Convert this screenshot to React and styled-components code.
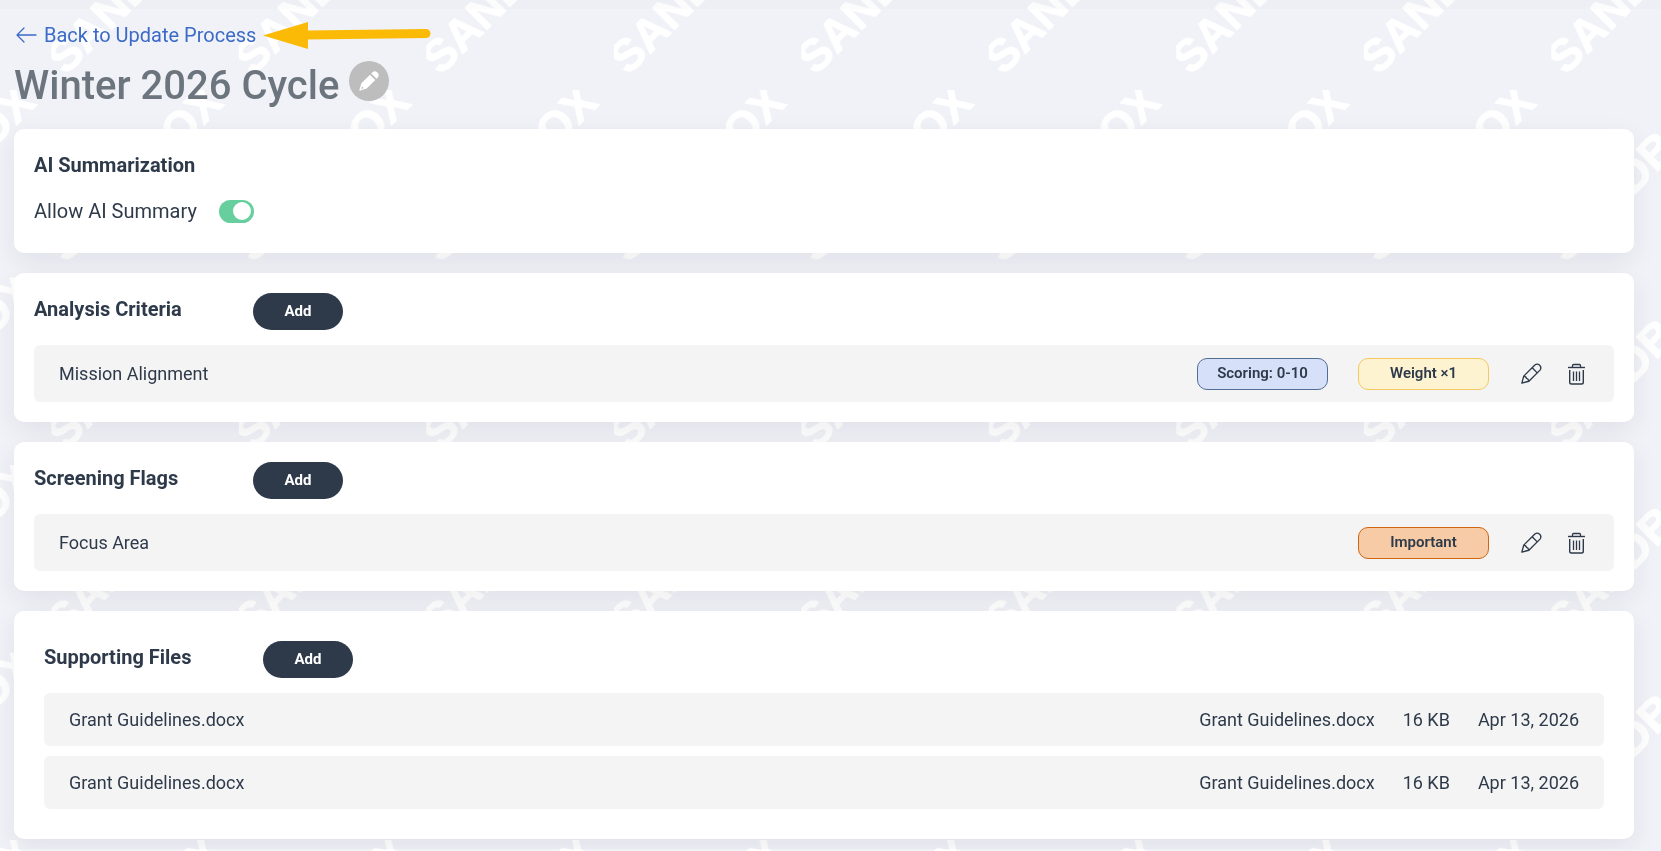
import React, { useState } from "react";
import styled, { createGlobalStyle } from "styled-components";

const GlobalStyle = createGlobalStyle`
  * {
    box-sizing: border-box;
  }

  body {
    margin: 0;
    background-color: #f1f2f8;
    color: #2e3a4a;
    font-family: Roboto, "Liberation Sans", sans-serif;
    font-size: 18px;
  }
`;

//Backdrop-------------------------------------------------
const Backdrop = styled.svg`
  position: fixed;
  inset: 0;
  width: 100%;
  height: 100%;
  z-index: -1;
`;

const TopShade = styled.div`
  position: fixed;
  inset: 0 0 auto 0;
  height: 9px;
  background: rgba(40, 50, 70, 0.015);
`;

//Header---------------------------------------------------
const Page = styled.main`
  padding: 22px 27px 10px 14px;
`;

const TopLine = styled.div`
  display: flex;
  align-items: center;
  gap: 7px;
  height: 26px;
`;

const BackLink = styled.a`
  display: flex;
  align-items: center;
  gap: 7px;
  color: #3b6bc6;
  font-size: 20px;
  line-height: 26px;
  text-decoration: none;
`;

const Pointer = styled.svg`
  width: 168px;
  height: 28px;
`;

const TitleLine = styled.div`
  display: flex;
  align-items: flex-start;
  gap: 10px;
  margin: 13px 0 18px;
`;

const Title = styled.h1`
  margin: 0;
  color: #6c757d;
  font-size: 40px;
  font-weight: 500;
  line-height: 50px;
`;

const RoundButton = styled.button`
  display: flex;
  align-items: center;
  justify-content: center;
  width: 40px;
  height: 40px;
  padding: 0;
  border: 0;
  border-radius: 50%;
  background: #bdbdbd;
  color: #fff;
  cursor: pointer;
`;

//Cards----------------------------------------------------
const CardList = styled.div`
  display: flex;
  flex-direction: column;
  gap: 20px;
`;

const Card = styled.section`
  padding: ${({ $roomy }) => ($roomy ? "30px" : "20px")};
  border-radius: 10px;
  background: #fff;
  box-shadow: 0 8px 26px rgba(40, 42, 50, 0.08);
`;

const CardHead = styled.div`
  display: flex;
  align-items: flex-start;
  margin-bottom: 15px;
`;

const CardTitle = styled.h2`
  width: 219px;
  margin: 0;
  font-size: 20px;
  font-weight: 700;
  line-height: 32px;
`;

const AddButton = styled.button`
  width: 90px;
  height: 37px;
  padding: 0 0 2px;
  border: 0;
  border-radius: 19px;
  background: #2e3a4a;
  color: #fff;
  font-family: inherit;
  font-size: 15px;
  font-weight: 700;
  cursor: pointer;
`;

const SwitchLabel = styled.label`
  display: flex;
  align-items: center;
  gap: 22px;
  margin: 15px 0 7px;
  font-size: 20px;
  line-height: 30px;
`;

const Switch = styled.input`
  appearance: none;
  display: flex;
  align-items: center;
  width: 35px;
  height: 23px;
  margin: 0;
  padding: 0 3px;
  border-radius: 12px;
  background: #c4c9cf;
  cursor: pointer;

  &::before {
    content: "";
    width: 18px;
    height: 18px;
    border-radius: 50%;
    background: #fff;
  }

  &:checked {
    justify-content: flex-end;
    background: #67cf9d;
  }
`;

//Rows-----------------------------------------------------
const Rows = styled.ul`
  display: flex;
  flex-direction: column;
  gap: 10px;
  margin: 0;
  padding: 0;
  list-style: none;
`;

const Row = styled.li`
  display: flex;
  align-items: center;
  gap: ${({ $tall }) => ($tall ? "30px" : "28px")};
  min-height: ${({ $tall }) => ($tall ? "57px" : "53px")};
  padding: 0 25px;
  border-radius: 6px;
  background: #f4f4f4;
  line-height: 24px;
`;

const RowName = styled.span`
  flex: 1;
`;

const tones = {
  blue: { bg: "#d6e1f9", line: "#516f94" },
  yellow: { bg: "#fef3d0", line: "#f5c962" },
  orange: { bg: "#f6cba5", line: "#d0650f" },
};

const Badge = styled.span`
  width: 131px;
  height: 32px;
  border: 1px solid ${({ $tone }) => tones[$tone].line};
  border-radius: 10px;
  background: ${({ $tone }) => tones[$tone].bg};
  font-size: 15px;
  font-weight: 600;
  line-height: 29px;
  text-align: center;
`;

const Actions = styled.div`
  display: flex;
  gap: 20px;
`;

const IconButton = styled.button`
  display: flex;
  align-items: center;
  justify-content: center;
  width: 25px;
  height: 25px;
  padding: 0;
  border: 0;
  background: none;
  color: #2e3a4a;
  cursor: pointer;
`;
//---------------------------------------------------------

const Watermark = () => (
  <Backdrop aria-hidden="true">
    <defs>
      <pattern
        id="sandbox"
        width="150"
        height="150"
        patternUnits="userSpaceOnUse"
        patternTransform="translate(51.3 90) scale(1.25)"
      >
        <text
          x="66"
          y="79"
          transform="rotate(-45 66 66)"
          textAnchor="middle"
          fontFamily="Liberation Sans, sans-serif"
          fontSize="36"
          fontWeight="700"
          fill="#fff"
          stroke="#fff"
          strokeWidth="0.8"
        >
          SANDBOX
        </text>
      </pattern>
    </defs>
    <rect width="100%" height="100%" fill="url(#sandbox)" />
  </Backdrop>
);

const ArrowIcon = () => (
  <svg width="23" height="16" viewBox="0 0 23 16" fill="none" stroke="currentColor" strokeLinecap="round" strokeLinejoin="round">
    <path d="M22 8H3M10 1 3 8l7 7" strokeWidth="1.3" />
  </svg>
);

const PencilIcon = () => (
  <svg width="21" height="21" viewBox="0 0 20 20" fill="none" stroke="currentColor" strokeWidth="1.3" strokeLinejoin="round">
    <path d="M2.6 12.5 13.2 1.9a3.5 3.5 0 0 1 4.9 4.9L7.5 17.4.8 19.2z" />
    <path d="M10.6 4.5l4.9 4.9M2.6 12.5q2.6.6 2.7 2.2 1.7.2 2.2 2.7" />
  </svg>
);

const PencilFillIcon = () => (
  <svg width="20" height="20" viewBox="0 0 20 20" fill="currentColor">
    <path d="M12.2 2.5l.9-.9a3.6 3.6 0 0 1 5.3 5.3l-.9.9z" />
    <path
      fillRule="evenodd"
      d="M11 3.7 16.3 9l-8.6 8.6-6.4 2q-1.1.2-.9-.9l2-6.4zM3 15.4l-.9 2.5 2.6-.8z"
    />
  </svg>
);

const TrashIcon = () => (
  <svg width="19" height="22" viewBox="0 0 19 22" fill="none" stroke="currentColor">
    <path d="M1 4.5h17" strokeWidth="1.4" />
    <path d="M5.5 4V2.6q0-1.1 1.1-1.1h5.8q1.1 0 1.1 1.1V4" strokeWidth="1.3" />
    <path d="M2.7 7v12.2q0 1.8 1.8 1.8h10q1.8 0 1.8-1.8V7" strokeWidth="1.4" />
    <path d="M6.5 8.5V18M9.5 8.5V18M12.5 8.5V18" strokeWidth="1.3" />
  </svg>
);

const RowActions = ({ name }) => (
  <Actions>
    <IconButton type="button" aria-label={`Edit ${name}`}>
      <PencilIcon />
    </IconButton>
    <IconButton type="button" aria-label={`Delete ${name}`}>
      <TrashIcon />
    </IconButton>
  </Actions>
);

const ItemCard = ({ title, roomy, children }) => (
  <Card $roomy={roomy}>
    <CardHead>
      <CardTitle>{title}</CardTitle>
      <AddButton type="button">Add</AddButton>
    </CardHead>
    <Rows>{children}</Rows>
  </Card>
);

const files = [
  { id: 1, name: "Grant Guidelines.docx", size: "16 KB", date: "Apr 13, 2026" },
  { id: 2, name: "Grant Guidelines.docx", size: "16 KB", date: "Apr 13, 2026" },
];

const App = () => {
  const [allowSummary, setAllowSummary] = useState(true);

  return (
    <>
      <GlobalStyle />
      <Watermark />
      <TopShade />
      <Page>
        <TopLine>
          <BackLink href="#">
            <ArrowIcon />
            Back to Update Process
          </BackLink>
          <Pointer viewBox="0 0 168 28" aria-hidden="true">
            <path d="M0 14.5 45 1v27z" fill="#fbba06" />
            <path d="M44 14 163 12.5" stroke="#fbba06" strokeWidth="9" strokeLinecap="round" />
          </Pointer>
        </TopLine>
        <TitleLine>
          <Title>Winter 2026 Cycle</Title>
          <RoundButton type="button" aria-label="Rename cycle">
            <PencilFillIcon />
          </RoundButton>
        </TitleLine>

        <CardList>
          <Card>
            <CardTitle>AI Summarization</CardTitle>
            <SwitchLabel>
              Allow AI Summary
              <Switch
                type="checkbox"
                role="switch"
                checked={allowSummary}
                onChange={(e) => setAllowSummary(e.target.checked)}
              />
            </SwitchLabel>
          </Card>

          <ItemCard title="Analysis Criteria">
            <Row $tall>
              <RowName>Mission Alignment</RowName>
              <Badge $tone="blue">Scoring: 0-10</Badge>
              <Badge $tone="yellow">Weight ×1</Badge>
              <RowActions name="Mission Alignment" />
            </Row>
          </ItemCard>

          <ItemCard title="Screening Flags">
            <Row $tall>
              <RowName>Focus Area</RowName>
              <Badge $tone="orange">Important</Badge>
              <RowActions name="Focus Area" />
            </Row>
          </ItemCard>

          <ItemCard title="Supporting Files" roomy>
            {files.map((file) => (
              <Row key={file.id}>
                <RowName>{file.name}</RowName>
                <span>{file.name}</span>
                <span>{file.size}</span>
                <span>{file.date}</span>
              </Row>
            ))}
          </ItemCard>
        </CardList>
      </Page>
    </>
  );
};

export default App;
